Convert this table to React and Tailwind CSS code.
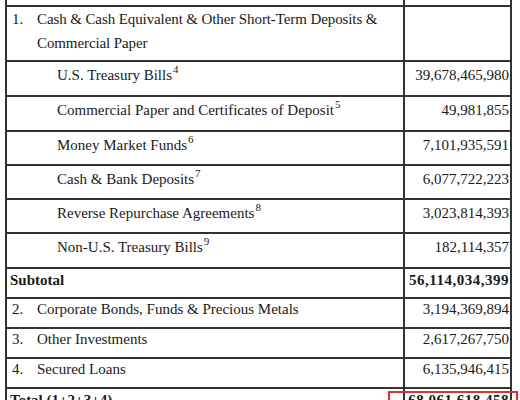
import React from "react";

const L = "border-[#333]";

function Row({ h, left, right, bold, pt = "pt-0" }) {
  return (
    <div className={`flex border-b-2 ${L} ${h}`}>
      <div className={`flex-1 ${pt} leading-[20px] ${bold ? "font-bold" : ""}`}>{left}</div>
      <div
        className={`w-[107px] border-l-2 ${L} ${pt} pr-[1px] text-right leading-[20px] ${bold ? "font-bold tracking-[0.5px]" : ""}`}
      >
        {right}
      </div>
    </div>
  );
}

const Sub = ({ children, n }) => (
  <div className="pl-[50px]">
    {children}
    <sup className="text-[11px] relative top-[-7px] align-baseline ml-[1px]">{n}</sup>
  </div>
);

const Num = ({ n, children }) => (
  <div className="flex pl-[5px]">
    <span className="w-[25px]">{n}</span>
    <span>{children}</span>
  </div>
);

export default function App() {
  return (
    <div
      className="relative w-[520px] h-[400px] overflow-hidden bg-white text-[15px] text-[#1a1a1a]"
      style={{ fontFamily: '"Liberation Serif", "Times New Roman", serif' }}
    >
      <div className={`ml-[5px] w-[507px] border-x-2 ${L}`}>
        <Row h="h-[7px]" left={null} right={null} />
        <div className={`flex border-b-2 ${L} h-[55px]`}>
          <div className="flex-1 leading-[24px] flex pl-[5px] tracking-[-0.1px]">
            <span className="w-[25px] shrink-0">1.</span>
            <span>
              Cash &amp; Cash Equivalent &amp; Other Short-Term Deposits &amp;
              <br />
              Commercial Paper
            </span>
          </div>
          <div className={`w-[107px] border-l-2 ${L}`} />
        </div>
        <Row h="h-[35px]" pt="pt-[3px]" left={<Sub n="4">U.S. Treasury Bills</Sub>} right="39,678,465,980" />
        <Row
          h="h-[35px]"
          pt="pt-[3px]"
          left={<Sub n="5">Commercial Paper and Certificates of Deposit</Sub>}
          right="49,981,855"
        />
        <Row h="h-[34px]" pt="pt-[3px]" left={<Sub n="6">Money Market Funds</Sub>} right="7,101,935,591" />
        <Row h="h-[34px]" pt="pt-[3px]" left={<Sub n="7">Cash &amp; Bank Deposits</Sub>} right="6,077,722,223" />
        <Row h="h-[34px]" pt="pt-[3px]" left={<Sub n="8">Reverse Repurchase Agreements</Sub>} right="3,023,814,393" />
        <Row h="h-[35px]" pt="pt-[3px]" left={<Sub n="9">Non-U.S. Treasury Bills</Sub>} right="182,114,357" />
        <Row h="h-[30px]" pt="pt-[1px]" bold left={<div className="pl-[3px]">Subtotal</div>} right="56,114,034,399" />
        <Row h="h-[30px]" left={<Num n="2.">Corporate Bonds, Funds &amp; Precious Metals</Num>} right="3,194,369,894" />
        <Row h="h-[30px]" left={<Num n="3.">Other Investments</Num>} right="2,617,267,750" />
        <Row h="h-[30px]" left={<Num n="4.">Secured Loans</Num>} right="6,135,946,415" />
        <Row h="h-[30px]" pt="pt-[1px]" bold left={<div className="pl-[3px]">Total (1+2+3+4)</div>} right="68,061,618,458" />
      </div>
      <div className="absolute left-[388px] top-[391px] w-[130px] h-[40px] border-2 border-[#e0302a]" />
    </div>
  );
}
